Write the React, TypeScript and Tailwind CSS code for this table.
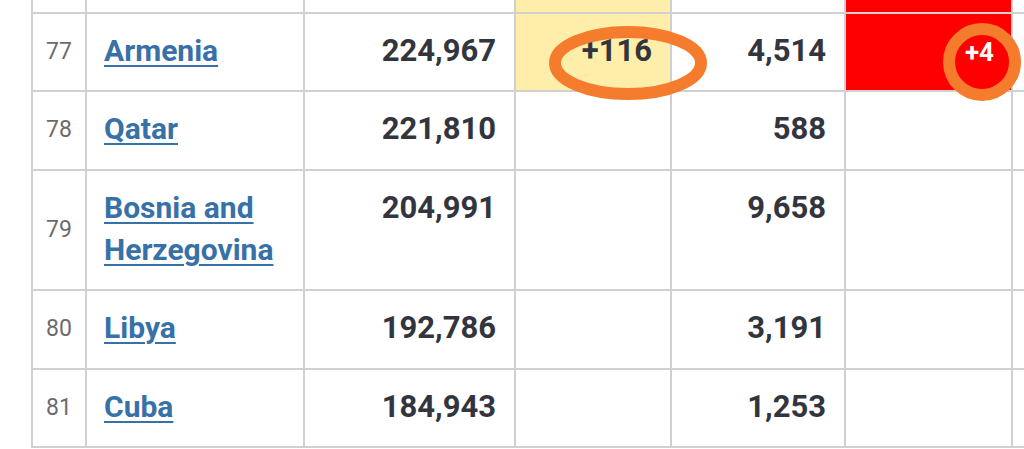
import React from "react";

type Row = {
  rank: number;
  name: string;
  total: string;
  newCases: string;
  deaths: string;
  newDeaths: string;
};

const rows: Row[] = [
  { rank: 77, name: "Armenia", total: "224,967", newCases: "+116", deaths: "4,514", newDeaths: "+4" },
  { rank: 78, name: "Qatar", total: "221,810", newCases: "", deaths: "588", newDeaths: "" },
  { rank: 79, name: "Bosnia and Herzegovina", total: "204,991", newCases: "", deaths: "9,658", newDeaths: "" },
  { rank: 80, name: "Libya", total: "192,786", newCases: "", deaths: "3,191", newDeaths: "" },
  { rank: 81, name: "Cuba", total: "184,943", newCases: "", deaths: "1,253", newDeaths: "" },
];

const num = "text-right pr-[18px] pt-[16px] text-[31px] leading-[42px] font-bold text-[#32353d]";

export default function App() {
  return (
    <div className="relative w-[1024px] h-[449px] overflow-hidden bg-white font-[family-name:Roboto,sans-serif]">
      <div className="ml-[31px] w-[1102px] grid grid-cols-[52px_216px_209px_154px_172px_165px_120px] grid-rows-[12px_76px_77px_118px_77px_76px] gap-[2px] bg-[#d0d0d0] pl-[2px] pb-[2px]">
        {/* partial row from above */}
        <div className="bg-white" />
        <div className="bg-white" />
        <div className="bg-white" />
        <div className="bg-[#ffeeaa]" />
        <div className="bg-white" />
        <div className="bg-[#ff0000]" />
        <div className="bg-white" />

        {rows.map((r) => (
          <React.Fragment key={r.rank}>
            <div className="bg-white flex items-center justify-center text-[23px] text-[#6b6b6b]">
              {r.rank}
            </div>
            <div className="bg-white pl-[17px] pr-[6px] pt-[16px] text-[30px] leading-[42px] font-bold text-[#3771a8]">
              <a className="underline decoration-[2px] underline-offset-[4px]">{r.name}</a>
            </div>
            <div className={`bg-white ${num}`}>{r.total}</div>
            <div className={`${r.newCases ? "bg-[#ffeeaa]" : "bg-white"} ${num}`}>{r.newCases}</div>
            <div className={`bg-white ${num}`}>{r.deaths}</div>
            <div
              className={`${
                r.newDeaths ? "bg-[#ff0000]" : "bg-white"
              } text-right pr-[17px] pt-[17px] text-[26px] leading-[42px] font-bold text-white`}
            >
              {r.newDeaths}
            </div>
            <div className="bg-white" />
          </React.Fragment>
        ))}
      </div>

      <svg
        className="absolute left-0 top-0 pointer-events-none"
        width="1024"
        height="449"
        viewBox="0 0 1024 449"
      >
        <ellipse cx="628" cy="63" rx="73" ry="31" fill="none" stroke="#f57b2d" strokeWidth="12" />
        <circle cx="982" cy="62" r="33" fill="none" stroke="#f57b2d" strokeWidth="12" />
      </svg>
    </div>
  );
}
